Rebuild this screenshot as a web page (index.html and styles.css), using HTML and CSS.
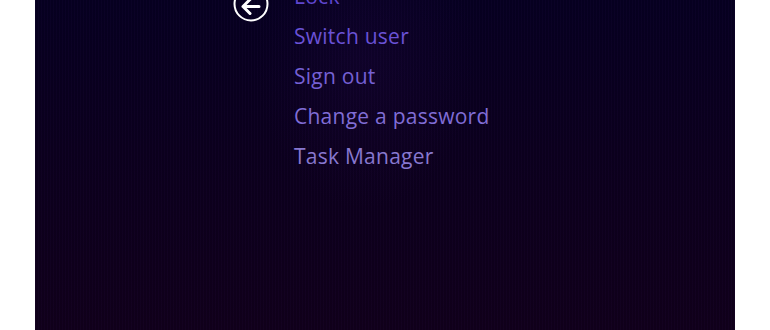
FILE: index.html
```html
<!DOCTYPE html>
<html>
<head>
<meta charset="utf-8">
<link rel="stylesheet" href="styles.css">
</head>
<body>
<div class="screen">
  <div class="security">
    <button class="back" aria-label="Back">
      <svg width="36" height="36" viewBox="0 0 36 36">
        <circle cx="18" cy="18" r="16.5" fill="none" stroke="#fff" stroke-width="2"/>
        <path d="M10 20.5 H26 M17 13.5 L10 20.5 L17 27.5" fill="none" stroke="#fff" stroke-width="3" stroke-linecap="round" stroke-linejoin="round"/>
      </svg>
    </button>
    <ul class="options">
      <li class="opt c0">Lock</li>
      <li class="opt c1">Switch user</li>
      <li class="opt c2">Sign out</li>
      <li class="opt c3">Change a password</li>
      <li class="opt c4">Task Manager</li>
    </ul>
  </div>
</div>
</body>
</html>
```
FILE: styles.css
```css
html, body {
  margin: 0;
  padding: 0;
  background: #ffffff;
  height: 330px;
  overflow: hidden;
}
.screen {
  width: 700px;
  height: 330px;
  margin: 0 auto;
  background:
    repeating-linear-gradient(90deg, rgba(120, 60, 200, 0.035) 0 1px, rgba(0,0,0,0) 1px 3px),
    radial-gradient(ellipse 110px 150px at 330px 60px, rgba(70, 20, 120, 0.11), rgba(0,0,0,0) 100%),
    linear-gradient(180deg, #060020 0%, #0b001d 45%, #10001a 100%);
  overflow: hidden;
  font-family: "Open Sans", "Noto Sans", sans-serif;
}
.security {
  display: flex;
  align-items: flex-start;
  padding-left: 198px;
  margin-top: -14px;
}
.back {
  width: 36px;
  height: 36px;
  padding: 0;
  border: 0;
  background: none;
  display: block;
}
.back svg { display: block; }
.options {
  list-style: none;
  margin: -10px 0 0 25px;
  padding: 0;
}
.opt {
  font-size: 21px;
  letter-spacing: 0.25px;
  line-height: 40px;
  height: 40px;
  white-space: nowrap;
}
.c0 { color: #5f46cf; }
.c1 { color: #6a52d6; }
.c2 { color: #7560d4; }
.c3 { color: #806dd6; }
.c4 { color: #8878d0; }
```
